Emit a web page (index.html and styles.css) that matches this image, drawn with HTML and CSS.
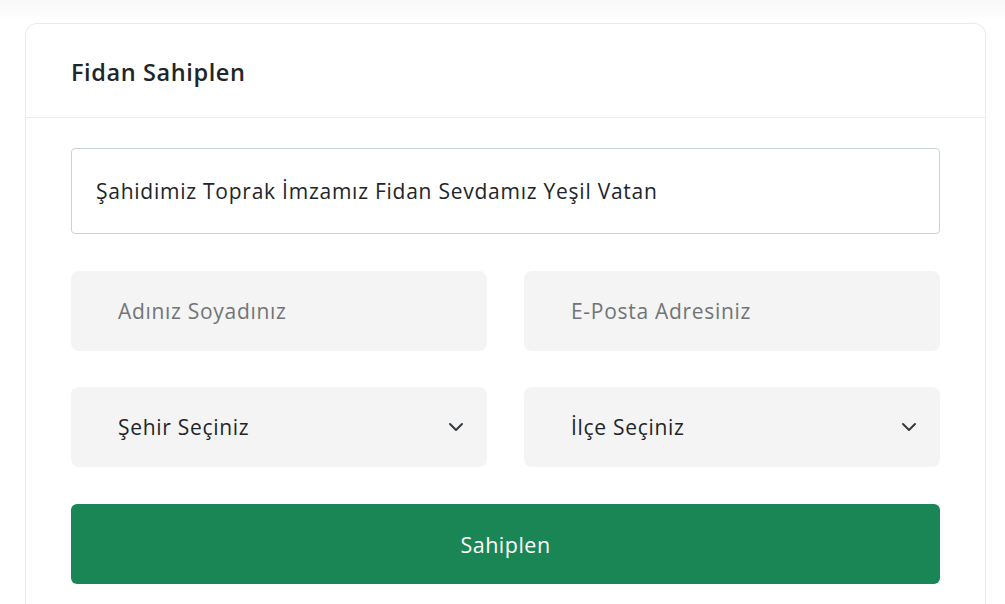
FILE: index.html
```html
<!DOCTYPE html>
<html lang="tr">
<head>
<meta charset="utf-8">
<title>Fidan Sahiplen</title>
<link rel="stylesheet" href="styles.css">
</head>
<body>
<div class="page">
  <section class="card">
    <header class="card-header">
      <h2 class="card-title">Fidan Sahiplen</h2>
    </header>
    <div class="card-body">
      <div class="motto">Şahidimiz Toprak İmzamız Fidan Sevdamız Yeşil Vatan</div>
      <div class="grid">
        <div class="field placeholder">Adınız Soyadınız</div>
        <div class="field placeholder">E-Posta Adresiniz</div>
        <div class="field select">
          <span>Şehir Seçiniz</span>
          <svg class="chev" width="16" height="10" viewBox="0 0 16 10"><path d="M2 2l6 6 6-6" fill="none" stroke="#343a40" stroke-width="2" stroke-linecap="round" stroke-linejoin="round"/></svg>
        </div>
        <div class="field select">
          <span>İlçe Seçiniz</span>
          <svg class="chev" width="16" height="10" viewBox="0 0 16 10"><path d="M2 2l6 6 6-6" fill="none" stroke="#343a40" stroke-width="2" stroke-linecap="round" stroke-linejoin="round"/></svg>
        </div>
      </div>
      <button class="btn" type="button">Sahiplen</button>
    </div>
  </section>
</div>
</body>
</html>
```

FILE: styles.css
```css
* { box-sizing: border-box; }
html, body { margin: 0; padding: 0; }
body {
  background: linear-gradient(#f9f9f9 0, #fcfcfc 14px, #ffffff 20px);
  font-family: "Open Sans", "Noto Sans", sans-serif;
  color: #212529;
}
.page {
  padding: 23px 20px 0 25px;
}
.card {
  width: 961px;
  background: #fff;
  border: 1px solid #ebebeb;
  border-bottom: 0;
  border-radius: 12px 12px 0 0;
}
.card-header {
  height: 94px;
  border-bottom: 1px solid #ececec;
  display: flex;
  align-items: center;
  padding: 0 45px;
}
.card-title {
  margin: 0;
  font-size: 23.5px;
  font-weight: 600;
  letter-spacing: 0.6px;
  color: #212529;
  padding-top: 2px;
}
.card-body {
  padding: 30px 45px 20px 45px;
  display: flex;
  flex-direction: column;
  gap: 37px;
}
.motto {
  height: 86px;
  border: 1px solid #c8d5cf;
  border-radius: 4px;
  display: flex;
  align-items: center;
  padding: 0 0 0 24px;
  font-size: 21px;
  letter-spacing: 0.75px;
  color: #212529;
}
.grid {
  display: grid;
  grid-template-columns: 1fr 1fr;
  column-gap: 37px;
  row-gap: 36px;
}
.field {
  height: 80px;
  background: #f4f4f4;
  border-radius: 8px;
  display: flex;
  align-items: center;
  padding: 0 23px 0 47px;
  font-size: 21px;
  letter-spacing: 0.7px;
}
.placeholder { color: #707478; }
.select {
  justify-content: space-between;
  color: #212529;
  font-weight: 500;
}
.chev { display: block; }
.btn {
  height: 80px;
  border: 0;
  border-radius: 6px;
  background: #1a8655;
  color: #fff;
  font-family: inherit;
  font-size: 21.5px;
  letter-spacing: 0.5px;
  font-weight: 500;
  cursor: pointer;
}
```
